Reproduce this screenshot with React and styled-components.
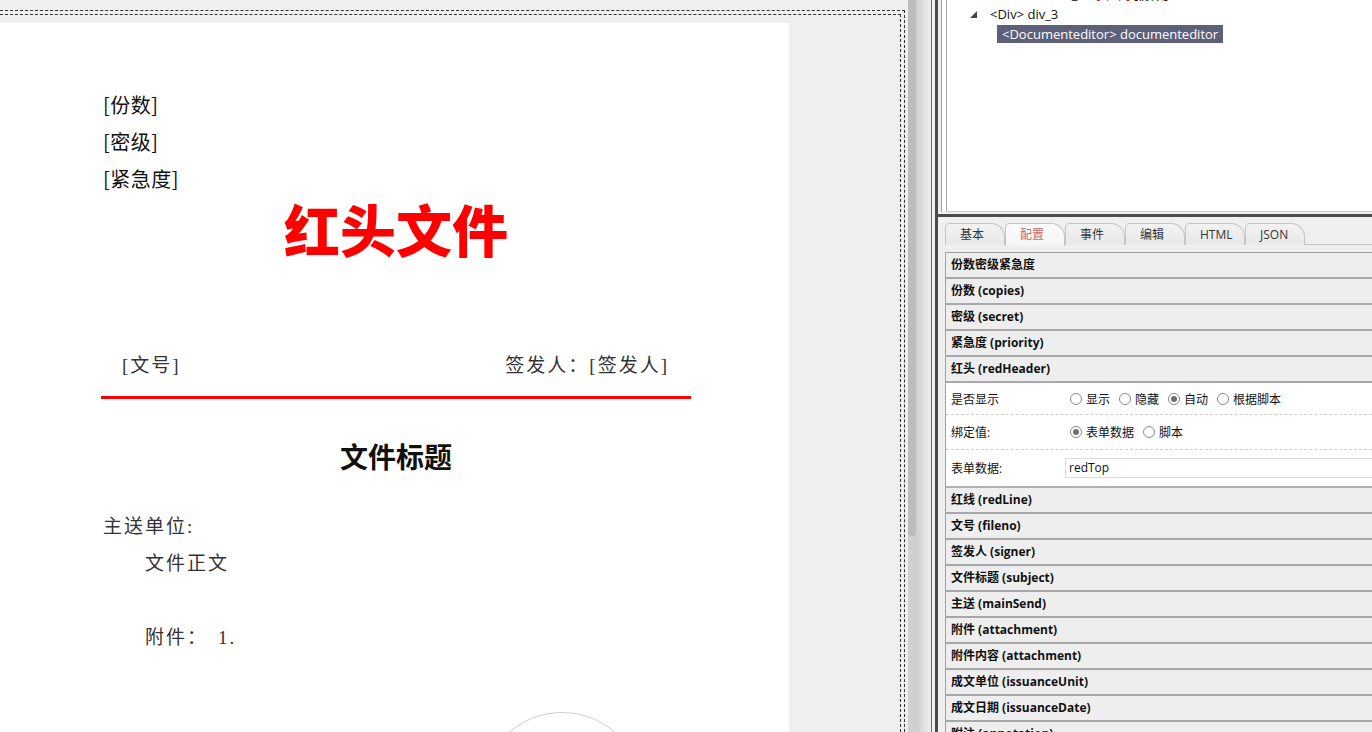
import styled, { createGlobalStyle } from "styled-components";

const GlobalStyle = createGlobalStyle`
  html, body {
    margin: 0;
    padding: 0;
    overflow: hidden;
    background: #efefef;
  }
  * {
    box-sizing: border-box;
  }
`;

const Layout = styled.div`
  display: flex;
  width: 1372px;
  height: 732px;
  overflow: hidden;
  font-family: "Open Sans", "Noto Sans CJK SC", sans-serif;
`;

/* 左侧：文档编辑区 */
const EditorPane = styled.div`
  flex: 0 0 908px;
  height: 100%;
  padding-top: 10px;
  background: #efefef;
  overflow: hidden;
`;

const OuterDash = styled.div`
  width: 905px;
  height: 100%;
  padding: 3px 3px 0 0;
  border-top: 1px dashed #333;
  border-right: 1px dashed #333;
`;

const InnerDash = styled.div`
  width: 901px;
  height: 100%;
  padding-top: 8px;
  border-top: 1px dashed #333;
  border-right: 1px dashed #333;
`;

const Page = styled.div`
  width: 789px;
  height: 900px;
  padding: 63px 98px 0 101px;
  background: #fff;
  font-family: "Noto Sans CJK SC", sans-serif;
`;

const MetaLine = styled.div`
  padding-left: 2px;
  font-size: 20px;
  line-height: 37px;
  color: #111;
  letter-spacing: 0.5px;
`;

const RedTitle = styled.div`
  text-align: center;
  font-size: 56px;
  line-height: 62px;
  font-weight: 900;
  color: #ff0000;
`;

const FileRow = styled.div`
  display: flex;
  justify-content: space-between;
  margin-top: 92px;
  padding: 0 22px 0 21px;
  font-family: "Liberation Serif", "Noto Sans CJK SC", serif;
  font-size: 19px;
  line-height: 30px;
  letter-spacing: 2px;
  color: #333;
`;

const RedRule = styled.div`
  height: 3px;
  margin-top: 15px;
  background: #ff0000;
`;

const DocTitle = styled.div`
  margin-top: 37px;
  text-align: center;
  font-size: 28px;
  line-height: 40px;
  font-weight: 700;
  color: #111;
`;

const Body = styled.div`
  margin-top: 32px;
  font-family: "Liberation Serif", "Noto Sans CJK SC", serif;
  font-size: 19px;
  line-height: 37px;
  letter-spacing: 2px;
  color: #333;
`;

const BodyLine = styled.div`
  height: 37px;
  padding-left: ${(p) => (p.$indent ? "44px" : "2px")};
`;

const AttachNo = styled.span`
  margin-left: 10px;
`;

const Seal = styled.div`
  width: 162px;
  height: 162px;
  margin: 56px 0 0 380px;
  border-radius: 50%;
  border: 1px solid #cfcfcf;
`;

/* 滚动条与分隔条 */
const ScrollTrack = styled.div`
  flex: 0 0 8px;
  height: 100%;
  background: #d0d0d0;
`;

const ScrollThumb = styled.div`
  height: 536px;
  background: #bcbcbc;
  border-radius: 0 0 4px 4px;
`;

const Splitter = styled.div`
  flex: 0 0 15px;
  height: 100%;
  background: linear-gradient(to right, #cdcdcd, #e3e3e3 60%, #eeeeee);
`;

/* 右侧面板 */
const SidePanel = styled.div`
  flex: 1;
  height: 100%;
  padding-left: 3px;
  border-left: 1px solid #6c6c6c;
  background: #f0f0f0;
  overflow: hidden;
`;

const SideInner = styled.div`
  display: flex;
  flex-direction: column;
  height: 100%;
  border-left: 3px solid #4b4b4b;
`;

const TreePanel = styled.div`
  flex: 0 0 212px;
  margin-left: 3px;
  padding-left: 4px;
  border-left: 1px solid #9c9c9c;
  background: #fff;
  overflow: hidden;
`;

const TreeInner = styled.div`
  height: 100%;
  border-left: 1px solid #a8a8a8;
  border-bottom: 1px solid #cfcfcf;
  overflow: hidden;
`;

const TreeList = styled.div`
  margin-top: -16px;
  font-size: 13px;
  color: #111;
`;

const TreeRow = styled.div`
  display: flex;
  align-items: center;
  height: 20px;
  padding-left: ${(p) => p.$indent}px;
  white-space: nowrap;
`;

const Expander = styled.span`
  display: inline-flex;
  width: 20px;
`;

const NodeLabel = styled.span`
  padding: 0 ${(p) => (p.$selected ? 5 : 0)}px;
  line-height: 18px;
  background: ${(p) => (p.$selected ? "#5c6079" : "transparent")};
  color: ${(p) => (p.$selected ? "#fff" : "#111")};
`;

const RedText = styled.span`
  color: #d22;
`;

const SplitBar = styled.div`
  flex: 0 0 3px;
  margin-top: 2px;
  background: #4b4b4b;
`;

const PropPanel = styled.div`
  flex: 1;
  padding: 6px 0 0 7px;
  background: #efefef;
  overflow: hidden;
`;

const TabBar = styled.div`
  display: flex;
  height: 22px;
  border-bottom: 1px solid #c4c4c4;
`;

const Tab = styled.div`
  width: 60px;
  padding-left: 14px;
  border: 1px solid #c4c4c4;
  border-bottom: none;
  border-radius: 5px 14px 0 0;
  background: ${(p) =>
    p.$active ? "linear-gradient(#fdfdfd, #f4f4f4)" : "linear-gradient(#f2f2f2, #e8e8e8)"};
  color: ${(p) => (p.$active ? "#c86a6a" : "#333")};
  font-size: 12px;
  line-height: 22px;
  height: ${(p) => (p.$active ? "23px" : "22px")};
`;

const Grid = styled.div`
  margin-top: 7px;
  border-top: 1px solid #9c9c9c;
  border-left: 1px solid #a0a0a0;
  font-size: 12px;
  color: #111;
`;

const GroupRow = styled.div`
  height: 26px;
  padding-left: 5px;
  border-bottom: 2px solid #a8a8a8;
  background: #eeeeee;
  font-weight: 700;
  line-height: 24px;
`;

const FieldRow = styled.div`
  display: grid;
  grid-template-columns: 119px 1fr;
  align-items: center;
  height: ${(p) => p.$h}px;
  background: #fff;
  border-bottom: ${(p) => (p.$last ? "2px solid #b0b0b0" : "1px dashed #cfcfcf")};
`;

const FieldLabel = styled.div`
  padding-left: 5px;
`;

const RadioGroup = styled.div`
  display: flex;
  align-items: center;
  gap: 9px;
  padding-left: 5px;
`;

const RadioItem = styled.label`
  display: flex;
  align-items: center;
  gap: 4px;
`;

const RadioDot = styled.span`
  position: relative;
  width: 12px;
  height: 12px;
  border-radius: 50%;
  border: 1px solid #8a8a8a;
  background: #fff;

  &::after {
    content: "";
    display: ${(p) => (p.$checked ? "block" : "none")};
    position: absolute;
    top: 2px;
    left: 2px;
    width: 6px;
    height: 6px;
    border-radius: 50%;
    background: #6e6e6e;
  }
`;

const TextInput = styled.div`
  width: 330px;
  height: 20px;
  padding-left: 3px;
  border: 1px solid #dcdcdc;
  background: #fff;
  line-height: 18px;
  font-size: 12px;
`;

function Radio({ label, checked }) {
  return (
    <RadioItem>
      <RadioDot $checked={checked} />
      {label}
    </RadioItem>
  );
}

const tabs = ["基本", "配置", "事件", "编辑", "HTML", "JSON"];

const topGroups = ["份数密级紧急度", "份数 (copies)", "密级 (secret)", "紧急度 (priority)", "红头 (redHeader)"];

const bottomGroups = [
  "红线 (redLine)",
  "文号 (fileno)",
  "签发人 (signer)",
  "文件标题 (subject)",
  "主送 (mainSend)",
  "附件 (attachment)",
  "附件内容 (attachment)",
  "成文单位 (issuanceUnit)",
  "成文日期 (issuanceDate)",
  "附注 (annotation)",
];

function App() {
  return (
    <>
      <GlobalStyle />
      <Layout>
        <EditorPane>
          <OuterDash>
            <InnerDash>
              <Page>
                <MetaLine>[份数]</MetaLine>
                <MetaLine>[密级]</MetaLine>
                <MetaLine>[紧急度]</MetaLine>
                <RedTitle>红头文件</RedTitle>
                <FileRow>
                  <span>[文号]</span>
                  <span>签发人：[签发人]</span>
                </FileRow>
                <RedRule />
                <DocTitle>文件标题</DocTitle>
                <Body>
                  <BodyLine>主送单位:</BodyLine>
                  <BodyLine $indent>文件正文</BodyLine>
                  <BodyLine $indent />
                  <BodyLine $indent>
                    附件：<AttachNo>1.</AttachNo>
                  </BodyLine>
                </Body>
                <Seal />
              </Page>
            </InnerDash>
          </OuterDash>
        </EditorPane>

        <ScrollTrack>
          <ScrollThumb />
        </ScrollTrack>
        <Splitter />

        <SidePanel>
          <SideInner>
            <TreePanel>
              <TreeInner>
                <TreeList>
                  <TreeRow $indent={25}>
                    <Expander>
                      <svg width="11" height="12" viewBox="0 0 11 12">
                        <rect x="1" y="1" width="9" height="10" fill="#fff" stroke="#5aa0e0" />
                        <line x1="3" y1="4" x2="8" y2="4" stroke="#5aa0e0" />
                        <line x1="3" y1="7" x2="8" y2="7" stroke="#5aa0e0" />
                      </svg>
                    </Expander>
                    <NodeLabel>
                      &lt;Label&gt; label_2 <RedText>- [印章]</RedText> [份数]
                    </NodeLabel>
                  </TreeRow>
                  <TreeRow $indent={23}>
                    <Expander>
                      <svg width="7" height="7" viewBox="0 0 7 7">
                        <polygon points="7,0 7,7 0,7" fill="#444" />
                      </svg>
                    </Expander>
                    <NodeLabel>&lt;Div&gt; div_3</NodeLabel>
                  </TreeRow>
                  <TreeRow $indent={50}>
                    <NodeLabel $selected>&lt;Documenteditor&gt; documenteditor</NodeLabel>
                  </TreeRow>
                </TreeList>
              </TreeInner>
            </TreePanel>
            <SplitBar />
            <PropPanel>
              <TabBar>
                {tabs.map((t) => (
                  <Tab key={t} $active={t === "配置"}>
                    {t}
                  </Tab>
                ))}
              </TabBar>
              <Grid>
                {topGroups.map((g) => (
                  <GroupRow key={g}>{g}</GroupRow>
                ))}
                <FieldRow $h={32}>
                  <FieldLabel>是否显示</FieldLabel>
                  <RadioGroup>
                    <Radio label="显示" />
                    <Radio label="隐藏" />
                    <Radio label="自动" checked />
                    <Radio label="根据脚本" />
                  </RadioGroup>
                </FieldRow>
                <FieldRow $h={35}>
                  <FieldLabel>绑定值:</FieldLabel>
                  <RadioGroup>
                    <Radio label="表单数据" checked />
                    <Radio label="脚本" />
                  </RadioGroup>
                </FieldRow>
                <FieldRow $h={38} $last>
                  <FieldLabel>表单数据:</FieldLabel>
                  <TextInput>redTop</TextInput>
                </FieldRow>
                {bottomGroups.map((g) => (
                  <GroupRow key={g}>{g}</GroupRow>
                ))}
              </Grid>
            </PropPanel>
          </SideInner>
        </SidePanel>
      </Layout>
    </>
  );
}

export default App;
